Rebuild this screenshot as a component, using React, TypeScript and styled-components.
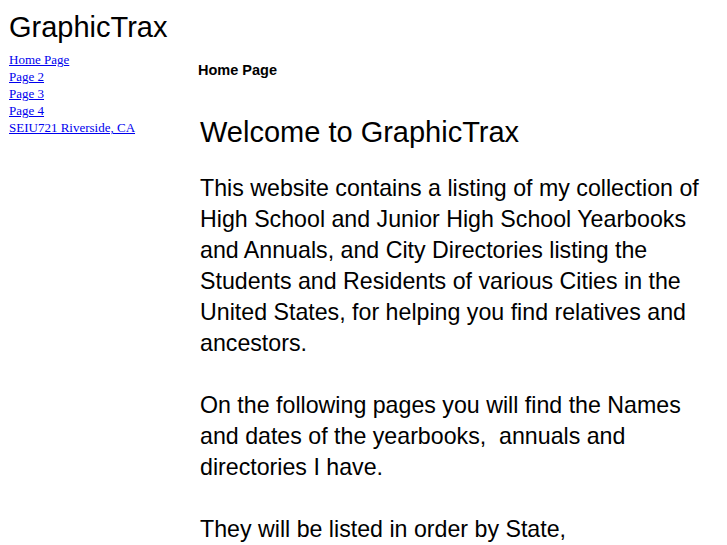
import { createGlobalStyle } from "styled-components";
import styled from "styled-components";

const GlobalStyle = createGlobalStyle`
  body {
    margin: 8px;
    background: #ffffff;
    color: #000000;
  }
`;

const Page = styled.div`
  display: flex;
  flex-direction: column;
  padding-top: 1px;
`;

const SiteTitle = styled.h1`
  margin: 0;
  font-family: "Liberation Sans", Arial, sans-serif;
  font-weight: normal;
  font-size: 29px;
  line-height: 36px;
  padding-left: 1px;
`;

const Columns = styled.div`
  display: flex;
  margin-top: 6px;
`;

const Sidebar = styled.nav`
  width: 189px;
  flex-shrink: 0;
  display: flex;
  flex-direction: column;
  padding-left: 1px;
`;

const NavLink = styled.a`
  font-family: "Liberation Serif", "Times New Roman", serif;
  font-size: 13px;
  line-height: 17px;
  color: #0000ee;
  text-decoration: underline;
`;

const Main = styled.main`
  display: flex;
  flex-direction: column;
  padding-top: 11px;
`;

const PageLabel = styled.div`
  font-family: "Liberation Sans", Arial, sans-serif;
  font-weight: bold;
  font-size: 14.5px;
  line-height: 17px;
`;

const Heading = styled.h2`
  margin: 35px 0 0 2px;
  font-family: "Liberation Sans", Arial, sans-serif;
  font-weight: normal;
  font-size: 29px;
  line-height: 36px;
`;

const Paragraph = styled.p<{ $first?: boolean }>`
  margin: ${(p) => (p.$first ? "23px" : "31px")} 0 0 2px;
  font-family: "Liberation Sans", Arial, sans-serif;
  font-size: 23.2px;
  line-height: 31px;
  width: 520px;
`;

const links = ["Home Page", "Page 2", "Page 3", "Page 4", "SEIU721 Riverside, CA"];

export default function App() {
  return (
    <>
      <GlobalStyle />
      <Page>
        <SiteTitle>GraphicTrax</SiteTitle>
        <Columns>
          <Sidebar>
            {links.map((l) => (
              <NavLink key={l} href="#">
                {l}
              </NavLink>
            ))}
          </Sidebar>
          <Main>
            <PageLabel>Home Page</PageLabel>
            <Heading>Welcome to GraphicTrax</Heading>
            <Paragraph $first>
              This website contains a listing of my collection of
              <br />
              High School and Junior High School Yearbooks
              <br />
              and Annuals, and City Directories listing the
              <br />
              Students and Residents of various Cities in the
              <br />
              United States, for helping you find relatives and
              <br />
              ancestors.
            </Paragraph>
            <Paragraph>
              On the following pages you will find the Names
              <br />
              and dates of the yearbooks,&nbsp; annuals and
              <br />
              directories I have.
            </Paragraph>
            <Paragraph>They will be listed in order by State,</Paragraph>
          </Main>
        </Columns>
      </Page>
    </>
  );
}
